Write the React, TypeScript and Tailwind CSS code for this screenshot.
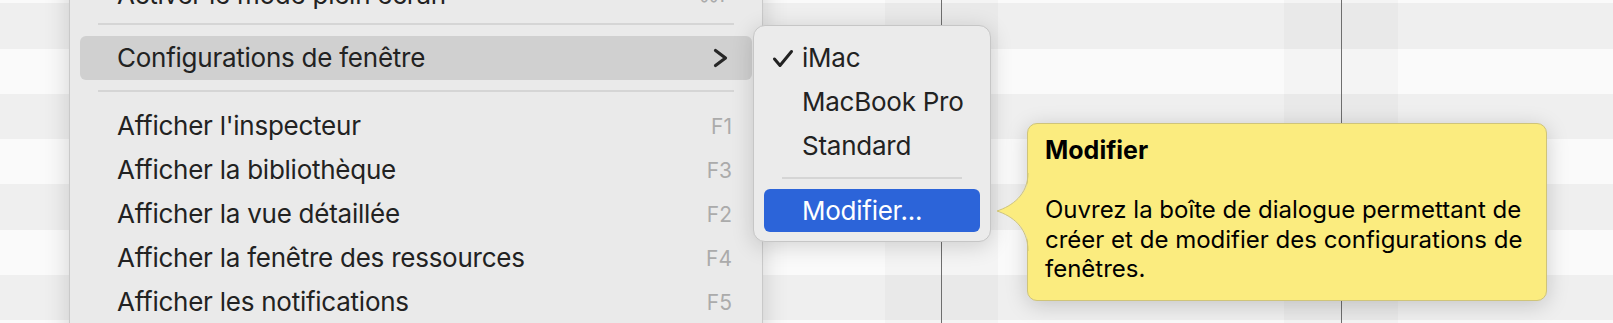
import React from "react";

function Band({ w, line }: { w: string; line: string }) {
  return (
    <div className={`${w} shrink-0 bg-black/[0.022] flex`}>
      <div className={`${line} w-px h-full bg-[#6e6e6e]`} />
    </div>
  );
}

function MenuRow({ label, shortcut, extra = "" }: { label: string; shortcut?: string; extra?: string }) {
  return (
    <div className={`h-[44px] shrink-0 flex items-center pl-[37px] pr-[20px] ${extra}`}>
      <span className="flex-1 text-[26px] tracking-[-0.25px] text-[#222222] leading-none whitespace-nowrap">{label}</span>
      {shortcut && <span className="text-[21px] text-[#ababab] leading-none">{shortcut}</span>}
    </div>
  );
}

function Sep({ pt, mx }: { pt: string; mx: string }) {
  return (
    <div className={`shrink-0 ${pt}`}>
      <div className={`${mx} h-[2px] bg-[#d5d5d5]`} />
    </div>
  );
}

export default function App() {
  const stripes = Array.from({ length: 9 });
  return (
    <div className="relative w-[1613px] h-[323px] overflow-hidden bg-[#fafafa] font-['Inter',sans-serif] antialiased">
      {/* striped rows */}
      <div className="flex flex-col mt-[-42px]">
        {stripes.map((_, i) => (
          <div key={i} className={`h-[45.25px] shrink-0 ${i % 2 === 0 ? "bg-[#fafafa]" : "bg-[#efefef]"}`} />
        ))}
      </div>

      {/* column bands with day lines */}
      <div className="absolute inset-0 flex">
        <div className="w-[85px] shrink-0" />
        <Band w="w-[113px]" line="ml-[56px]" />
        <div className="w-[287px] shrink-0" />
        <Band w="w-[113px]" line="ml-[56px]" />
        <div className="w-[287px] shrink-0" />
        <Band w="w-[113px]" line="ml-[56px]" />
        <div className="w-[286px] shrink-0" />
        <Band w="w-[114px]" line="ml-[57px]" />
      </div>

      {/* main menu */}
      <div className="absolute left-[69px] top-[-44px] w-[694px] h-[420px] bg-[#eaeaea] border border-[#c9c9c9] rounded-[12px] shadow-[0_0_26px_rgba(0,0,0,0.16)] flex flex-col px-[10px] pt-[11px]">
        <MenuRow label="Activer le mode plein écran" shortcut="⌃⌘F" extra="pt-[9px]" />
        <Sep pt="pt-[11px] h-[24px]" mx="mx-[18px]" />
        <div className="h-[44px] shrink-0 flex items-center pl-[37px] pr-[24px] rounded-[6px] bg-[#d0d0d0]">
          <span className="flex-1 text-[26px] tracking-[-0.25px] text-[#222222] leading-none">Configurations de fenêtre</span>
          <svg width="15" height="20" viewBox="0 0 15 20" fill="none">
            <polyline points="2.5,2.5 12.5,10 2.5,17.5" stroke="#262626" strokeWidth="3.2" strokeLinecap="round" strokeLinejoin="round" />
          </svg>
        </div>
        <Sep pt="pt-[10px] h-[24px]" mx="mx-[18px]" />
        <MenuRow label="Afficher l'inspecteur" shortcut="F1" />
        <MenuRow label="Afficher la bibliothèque" shortcut="F3" />
        <MenuRow label="Afficher la vue détaillée" shortcut="F2" />
        <MenuRow label="Afficher la fenêtre des ressources" shortcut="F4" />
        <MenuRow label="Afficher les notifications" shortcut="F5" />
      </div>

      {/* submenu */}
      <div className="absolute left-[753px] top-[25px] w-[238px] h-[217px] bg-[#ebebeb] border border-[#c6c6c6] rounded-[12px] shadow-[0_4px_22px_rgba(0,0,0,0.16)] flex flex-col px-[10px] pt-[10px]">
        <div className="relative h-[44px] shrink-0 flex items-center pl-[38px]">
          <svg className="absolute left-[8px] top-[13px]" width="22" height="19" viewBox="0 0 22 19" fill="none">
            <polyline points="2.5,10 8,16.5 19.5,2.5" stroke="#222222" strokeWidth="3" strokeLinecap="round" strokeLinejoin="round" />
          </svg>
          <span className="text-[26px] tracking-[-0.25px] text-[#222222] leading-none">iMac</span>
        </div>
        <div className="h-[44px] shrink-0 flex items-center pl-[38px]">
          <span className="text-[26px] tracking-[-0.25px] text-[#222222] leading-none">MacBook Pro</span>
        </div>
        <div className="h-[44px] shrink-0 flex items-center pl-[38px]">
          <span className="text-[26px] tracking-[-0.25px] text-[#222222] leading-none">Standard</span>
        </div>
        <Sep pt="pt-[9px] h-[21px]" mx="mx-[18px]" />
        <div className="h-[43px] shrink-0 flex items-center pl-[38px] rounded-[6px] bg-[#2c64d9]">
          <span className="text-[26px] tracking-[-0.25px] text-white leading-none">Modifier...</span>
        </div>
      </div>

      {/* help tag */}
      <div className="absolute left-[1027px] top-[123px] w-[520px] h-[178px] bg-[#fbec7f] border border-[#cfc47a] rounded-[10px] shadow-[0_4px_22px_rgba(0,0,0,0.18)] pl-[17px] pr-[20px] pt-[12px] text-black">
        <svg className="absolute left-[-32px] top-[49px]" width="34" height="80" viewBox="0 0 34 80" fill="none">
          <path d="M33 0 C33 22 16 33 1 38 C16 43 33 54 33 78 Z" fill="#fbec7f" />
          <path d="M32 0 C32 22 16 33 1 38 C16 43 32 54 32 78" stroke="#cfc47a" strokeWidth="1" fill="none" />
        </svg>
        <div className="text-[25px] font-bold leading-[29.5px]">Modifier</div>
        <div className="h-[29.5px]" />
        <div className="text-[24px] leading-[29.5px]">
          Ouvrez la boîte de dialogue permettant de créer et de modifier des configurations de fenêtres.
        </div>
      </div>
    </div>
  );
}
